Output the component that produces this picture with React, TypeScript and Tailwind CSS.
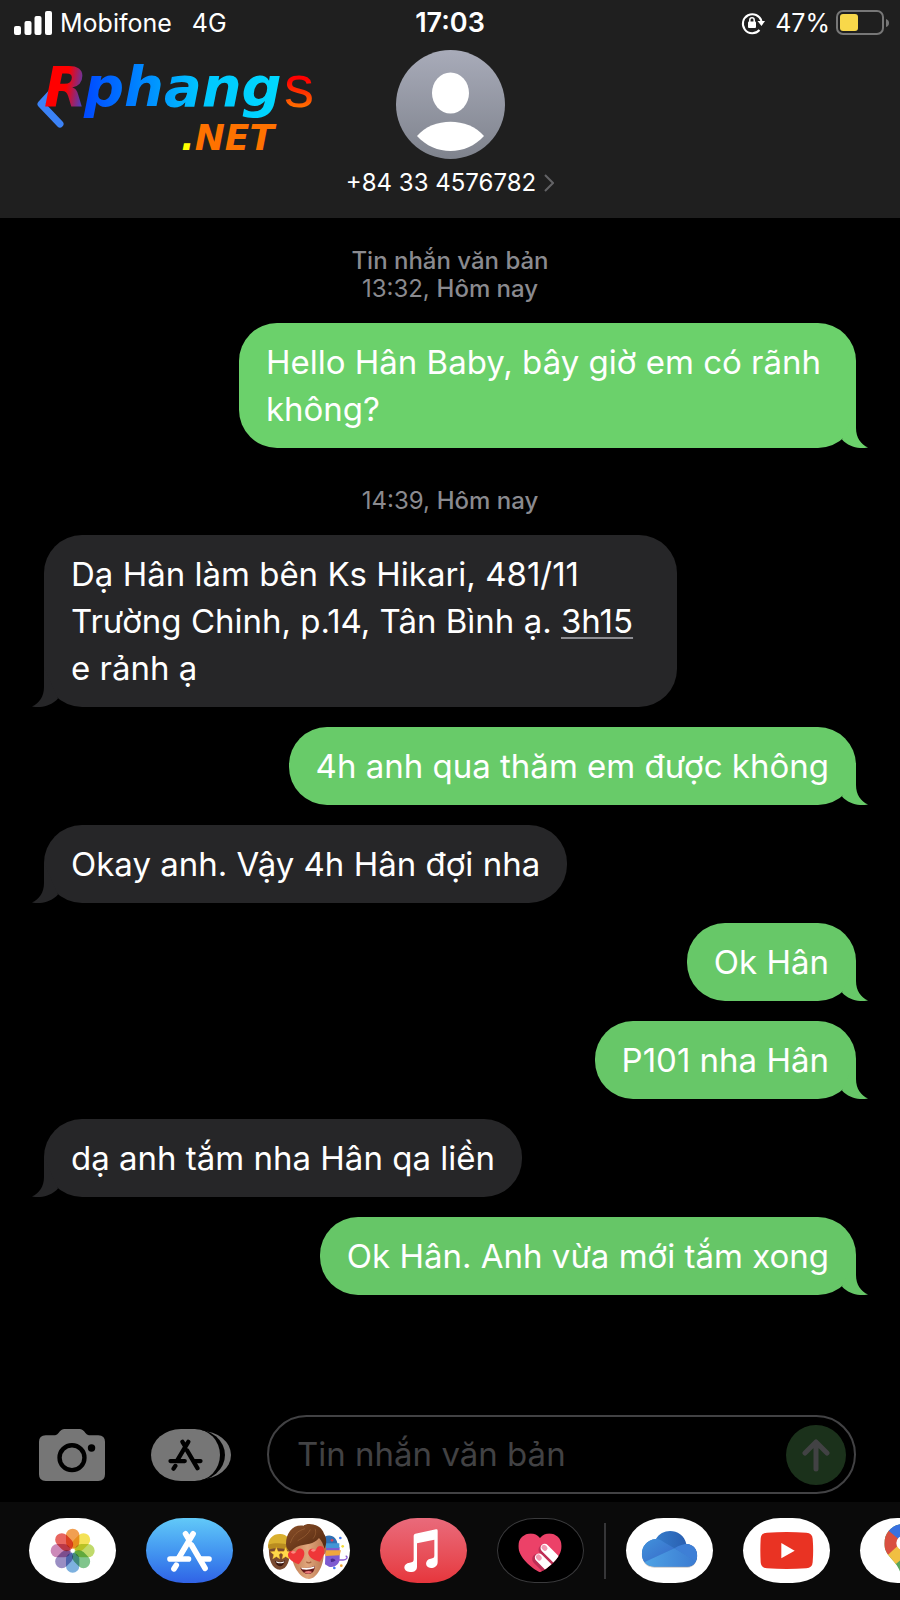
import React, { useState } from 'react';
import clsx from 'clsx';

type Message = {
  from: 'me' | 'them';
  text: React.ReactNode;
  tone: string;
};

const firstMessages: Message[] = [
  { from: 'me', text: 'Hello Hân Baby, bây giờ em có rãnh không?', tone: 'bg-[#6bd16b] text-[#6bd16b]' },
];

const laterMessages: Message[] = [
  {
    from: 'them',
    text: (
      <>
        Dạ Hân làm bên Ks Hikari, 481/11 Trường Chinh, p.14, Tân Bình ạ.{' '}
        <a href="#event" className="underline decoration-[#8e8e93] decoration-2 underline-offset-4">3h15</a>{' '}
        e rảnh ạ
      </>
    ),
    tone: 'bg-[#262628] text-[#262628]',
  },
  { from: 'me', text: '4h anh qua thăm em được không', tone: 'bg-[#68cb69] text-[#68cb69]' },
  { from: 'them', text: 'Okay anh. Vậy 4h Hân đợi nha', tone: 'bg-[#262628] text-[#262628]' },
  { from: 'me', text: 'Ok Hân', tone: 'bg-[#67c868] text-[#67c868]' },
  { from: 'me', text: 'P101 nha Hân', tone: 'bg-[#67c768] text-[#67c768]' },
  { from: 'them', text: 'dạ anh tắm nha Hân qa liền', tone: 'bg-[#262628] text-[#262628]' },
  { from: 'me', text: 'Ok Hân. Anh vừa mới tắm xong', tone: 'bg-[#66c667] text-[#66c667]' },
];

const petals = ['#f0953e', '#f3df45', '#b9d65b', '#72bf80', '#6fa8dc', '#8f82bd', '#c77cb0', '#e5554f'];

const Bubble: React.FC<{ message: Message }> = ({ message }) => {
  const mine = message.from === 'me';
  return (
    <li
      className={clsx(
        'relative rounded-[38px] px-[27px] pt-4 pb-[15px]',
        mine ? 'max-w-[76%] self-end' : 'max-w-[78%] self-start',
        message.tone
      )}
    >
      <p className="text-[33px] leading-[47px] text-white">{message.text}</p>
      <svg
        viewBox="0 0 40 40"
        className={clsx('absolute bottom-0 size-10', mine ? '-right-3' : '-left-3 -scale-x-100')}
        fill="currentColor"
        aria-hidden="true"
      >
        <path d="M28 0V20C28 30 33 36 40 39.6C31 41.2 21 39 14 31.5Z" />
      </svg>
    </li>
  );
};

const Logo = () => (
  <svg viewBox="0 0 300 120" className="h-[120px] w-[300px] overflow-visible" role="img" aria-label="Rphangs.NET">
    <defs>
      <linearGradient id="logoR" x1="0" y1="0" x2="1" y2="0.25">
        <stop offset="0.6" stopColor="#ff0000" />
        <stop offset="1" stopColor="#4a3fc0" />
      </linearGradient>
      <linearGradient id="logoWord" x1="0" x2="1">
        <stop offset="0" stopColor="#0048ff" />
        <stop offset="0.6" stopColor="#00c8ff" />
        <stop offset="1" stopColor="#00d8ff" />
      </linearGradient>
      <linearGradient id="logoS" x1="0" y1="0" x2="0" y2="1">
        <stop offset="0.4" stopColor="#ff0000" />
        <stop offset="0.85" stopColor="#ff7b00" />
      </linearGradient>
    </defs>
    <path d="M20 44L9 56L28 76" fill="none" stroke="#3b82f6" strokeWidth="7" strokeLinecap="round" strokeLinejoin="round" />
    <g fontFamily="DejaVu Sans, sans-serif" fontWeight="bold" fontStyle="italic">
      <text x="12" y="58" fontSize="56" fill="url(#logoR)">R</text>
      <text x="52" y="58" fontSize="56" fill="url(#logoWord)">phang</text>
      <text x="149" y="102" fontSize="36" fill="#ff7200"><tspan fill="#ffff00">.</tspan>NET</text>
    </g>
    <text x="252" y="59" fontSize="60" fontFamily="Liberation Sans, sans-serif" fill="url(#logoS)">s</text>
  </svg>
);

const Avatar = () => (
  <svg viewBox="0 0 109 109" className="size-[109px]" aria-hidden="true">
    <defs>
      <linearGradient id="avatar" x1="0" y1="0" x2="0" y2="1">
        <stop stopColor="#a8abb9" />
        <stop offset="1" stopColor="#7f838d" />
      </linearGradient>
    </defs>
    <circle cx="54.5" cy="54.5" r="54.5" fill="url(#avatar)" />
    <ellipse cx="54.5" cy="43" rx="18.5" ry="20.5" fill="#fff" />
    <path d="M21 86C37 67 72 67 88 86C70 106 39 106 21 86Z" fill="#fff" />
  </svg>
);

const StoreGlyph: React.FC<{ className: string }> = ({ className }) => (
  <svg viewBox="63 32 136 126" className={className} fill="none" stroke="currentColor" strokeWidth="17" strokeLinecap="round" aria-hidden="true">
    <path d="M142 43L98 117M119 43L128 58M137 77L178 147M91 138L84 149" />
    <path d="M72 119H128M164 119H190" />
  </svg>
);

const PhotosArt = () => (
  <svg viewBox="0 0 261 195" className="size-full isolate">
    {petals.map((color, index) => (
      <rect
        key={color}
        x="111"
        y="32"
        width="40"
        height="60"
        rx="20"
        fill={color}
        fillOpacity="0.9"
        transform={`rotate(${index * 45} 131 98)`}
        className="mix-blend-multiply"
      />
    ))}
    <circle cx="131" cy="98" r="5" fill="#fff" />
  </svg>
);

const MemojiArt = () => (
  <svg viewBox="0 0 261 195" className="size-full">
    <defs>
      <linearGradient id="hair" x1="0" y1="0" x2="1" y2="1">
        <stop stopColor="#8b5029" />
        <stop offset="1" stopColor="#4f250e" />
      </linearGradient>
      <linearGradient id="skin" x1="0" x2="1">
        <stop stopColor="#b9764c" />
        <stop offset="0.5" stopColor="#e0a67c" />
        <stop offset="1" stopColor="#b5734b" />
      </linearGradient>
      <path id="heart" d="M0 24C-15 13-24 4-23-8C-21-20-6-22 0-10C6-22 21-20 23-8C24 4 15 13 0 24Z" />
      <path id="star" d="M0-19L5-7L18-6L8 3L11 16L0 9L-11 16L-8 3L-18-6L-5-7Z" />
    </defs>
    <path d="M18 88C16 125 27 155 51 155C72 154 82 130 81 88Z" fill="#7a4a30" />
    <path d="M15 90C14 60 31 47 52 48C72 49 84 63 82 94C63 86 37 85 15 90Z" fill="#d9b02f" />
    <path d="M16 80C37 73 62 75 80 82L79 98C60 89 36 89 17 95Z" fill="#b98c20" />
    <use href="#star" x="40" y="107" fill="#ffd84a" stroke="#e9a61f" />
    <use href="#star" x="68" y="107" fill="#ffd84a" stroke="#e9a61f" />
    <path d="M36 128Q52 136 66 127Q62 145 51 145Q39 143 36 128Z" fill="#3b1710" />
    <path d="M39 130Q51 136 64 130L62 134Q51 138 41 134Z" fill="#fff" />
    <path d="M188 88H230V119C231 139 214 150 198 146L186 139Z" fill="#7d5bd0" />
    <path d="M185 56C203 46 224 57 224 84L188 84Z" fill="#2f6fb4" />
    <path d="M187 76H229V90H187Z" fill="#4295d5" />
    <path d="M187 97H234L230 112L187 114Z" fill="#f0a63c" />
    <circle cx="207" cy="67" r="4" fill="#d94255" />
    <path d="M216 126H241C252 126 256 116 248 114" fill="none" stroke="#8b5bd3" strokeWidth="4" />
    <path d="M203 123Q211 118 218 127Q212 133 204 132Z" fill="#4a2b92" />
    <circle cx="232" cy="60" r="4" fill="#4378ef" />
    <circle cx="239" cy="85" r="4" fill="#f4dc36" />
    <circle cx="214" cy="150" r="4" fill="#4378ef" />
    <circle cx="235" cy="143" r="4" fill="#f2a434" />
    <path d="M82 84C74 84 73 103 86 111C89 148 114 183 138 183C161 182 181 145 182 111C193 105 191 84 184 81L169 52H97Z" fill="url(#skin)" />
    <path d="M69 78C69 42 91 18 122 23C132 12 174 17 183 47C193 60 190 82 185 92C181 80 176 68 168 60C152 80 128 78 110 83C96 87 88 96 83 102C74 96 69 89 69 78Z" fill="url(#hair)" />
    <path d="M82 75C90 50 105 38 126 32M104 68C122 58 136 48 142 34M150 62C158 52 160 42 156 32" fill="none" stroke="#b97c4a" strokeWidth="2" opacity="0.6" />
    <use href="#heart" fill="#ef3638" transform="translate(101 114) rotate(-14) scale(1.07)" />
    <use href="#heart" fill="#ef3638" transform="translate(162 107) rotate(-18) scale(1.07)" />
    <ellipse cx="91" cy="103" rx="6" ry="4" fill="#ff8580" />
    <ellipse cx="151" cy="97" rx="6" ry="4" fill="#ff8580" />
    <path d="M130 131Q137 138 145 131" fill="none" stroke="#a86440" strokeWidth="4" />
    <path d="M112 149Q137 153 156 143Q155 168 135 168Q118 167 112 149Z" fill="#67191a" />
    <path d="M114 149Q137 153 155 145L153 151Q135 158 117 154Z" fill="#fff" />
    <path d="M123 163Q136 156 148 162Q137 172 123 163Z" fill="#e97575" />
  </svg>
);

const MusicArt = () => (
  <svg viewBox="0 0 261 195" className="size-full" fill="#fff">
    <path d="M101 53Q101 48 106 47L168 34Q173 33 173 38V132C173 144 163 150 153 150C133 149 134 124 152 122C160 121 163 120 163 112V65L111 76V146C111 158 101 163 90 162C67 160 68 136 89 134C98 133 101 131 101 124Z" />
  </svg>
);

const HeartArt = () => (
  <svg viewBox="0 0 261 195" className="size-full">
    <defs>
      <clipPath id="touch">
        <path d="M129 163C105 151 64 119 64 84C64 48 108 34 129 60C150 34 194 48 194 84C194 119 153 151 129 163Z" />
      </clipPath>
    </defs>
    <g clipPath="url(#touch)" strokeLinecap="round">
      <path d="M50 30H210V180H50Z" fill="#ec4168" />
      <path d="M140 95L196 151M121 123L175 177" stroke="#bd2e55" strokeWidth="31" />
      <path d="M143 90L199 146M126 119L180 173" stroke="#fff" strokeWidth="25" />
      <path d="M141 88L144 91M124 117L127 120" stroke="#f29ab2" strokeWidth="15" />
    </g>
  </svg>
);

const CloudArt = () => (
  <svg viewBox="0 0 261 195" className="size-full">
    <defs>
      <linearGradient id="cloudBack" x1="0" x2="1">
        <stop stopColor="#3b8ad8" />
        <stop offset="1" stopColor="#2453a6" />
      </linearGradient>
      <linearGradient id="cloudSide" x1="0" y1="0" x2="1" y2="1">
        <stop stopColor="#4295dc" />
        <stop offset="1" stopColor="#3767c8" />
      </linearGradient>
      <linearGradient id="cloudFront" x1="0" x2="1">
        <stop stopColor="#4fa4e5" />
        <stop offset="1" stopColor="#3b7bd2" />
      </linearGradient>
      <clipPath id="cloud">
        <path d="M85 146C35 146 34 68 90 63C109 27 171 31 181 78C226 80 222 146 184 146Z" />
      </clipPath>
    </defs>
    <path d="M85 149C35 149 34 71 90 66C109 30 171 34 181 81C226 83 222 149 184 149Z" fill="#000" opacity="0.2" />
    <g clipPath="url(#cloud)">
      <path d="M40 30H220V150H40Z" fill="url(#cloudBack)" />
      <path d="M40 60Q92 53 114 73L145 91L60 131L40 140Z" fill="url(#cloudSide)" />
      <path d="M145 91Q180 68 216 83V140L200 125Z" fill="#3e7fd6" />
      <path d="M58 131L145 91L211 130V150H50Z" fill="url(#cloudFront)" />
    </g>
  </svg>
);

const TubeArt = () => (
  <svg viewBox="0 0 261 195" className="size-full">
    <path d="M72 44Q131 40 190 44Q208 45 209 62Q212 97 209 133Q208 150 190 151Q131 155 72 151Q54 150 53 133Q51 97 53 62Q54 45 72 44Z" fill="#e93323" />
    <path d="M115 75L155 98L115 121Z" fill="#fff" />
  </svg>
);

const MapsArt = () => (
  <svg viewBox="0 0 261 195" className="size-full">
    <defs>
      <clipPath id="pin">
        <path d="M130 18C98 18 73 43 73 77C73 116 112 126 122 167Q130 190 138 167C148 126 187 116 187 77C187 43 162 18 130 18Z" />
      </clipPath>
    </defs>
    <g clipPath="url(#pin)">
      <path d="M60 0H200V190H60Z" fill="#58a55c" />
      <path d="M60 125L170 20L190 70L105 140L85 122Z" fill="#f1bf42" />
      <path d="M60 20L88 36L128 70L84 110L60 120Z" fill="#d95040" />
      <path d="M86 38L105 0H190L130 75Z" fill="#3871e0" />
    </g>
    <circle cx="130" cy="75" r="21" fill="#fff" />
  </svg>
);

const apps = [
  { name: 'Photos', shell: 'bg-white', art: <PhotosArt /> },
  {
    name: 'App Store',
    shell: 'bg-linear-to-b from-[#62c9f8] to-[#3162e6] text-white',
    art: <StoreGlyph className="h-[42px] w-[45px]" />,
  },
  { name: 'Memoji', shell: 'bg-white', art: <MemojiArt /> },
  { name: 'Music', shell: 'bg-linear-to-b from-[#e96a7b] to-[#e6353c]', art: <MusicArt /> },
  { name: 'Digital Touch', shell: 'bg-black ring-1 ring-[#3a3a3c] ring-inset', art: <HeartArt /> },
];

const moreApps = [
  { name: 'OneDrive', shell: 'bg-white', art: <CloudArt /> },
  { name: 'YouTube', shell: 'bg-white', art: <TubeArt /> },
  { name: 'Google Maps', shell: 'bg-white', art: <MapsArt /> },
];

const AppButton: React.FC<{ app: (typeof apps)[number] }> = ({ app }) => (
  <button
    type="button"
    aria-label={app.name}
    className={clsx(
      'flex h-[65px] w-[87px] shrink-0 items-center justify-center overflow-hidden rounded-[38px/33px]',
      app.shell
    )}
  >
    {app.art}
  </button>
);

const StatusBar = () => (
  <div className="grid h-[46px] grid-cols-[1fr_auto_1fr] items-center px-3.5 text-[25px] leading-8">
    <div className="flex items-center gap-2">
      <svg viewBox="0 0 38 24" className="h-6 w-[38px]" fill="#fff" aria-hidden="true">
        <rect x="0" y="15" width="7" height="9" rx="2" />
        <rect x="10.500" y="10" width="7" height="14" rx="2" />
        <rect x="20.500" y="5" width="7" height="19" rx="2" />
        <rect x="31" y="0" width="7" height="24" rx="2" />
      </svg>
      <span>Mobifone</span>
      <span className="ml-3">4G</span>
    </div>
    <time className="text-[27px] font-semibold">17:03</time>
    <div className="flex items-center justify-end">
      <svg viewBox="0 0 24 24" className="mr-2.5 size-6" fill="none" stroke="#fff" strokeWidth="2" aria-hidden="true">
        <path d="M18.500 19A9.500 9.500 0 1 1 20.500 10" />
        <path d="M16.500 10H24L20.500 15Z" fill="#fff" stroke="none" />
        <rect x="7" y="10.500" width="8" height="6.500" rx="1" fill="#fff" stroke="none" />
        <path d="M8.800 11V9A2.200 2.200 0 0 1 13.200 9V11" strokeWidth="1.500" />
      </svg>
      <span>47%</span>
      <svg viewBox="0 0 54 26" className="-mr-1 ml-1.5 h-[26px] w-[54px]" aria-hidden="true">
        <rect x="1" y="1" width="46" height="23" rx="6" fill="none" stroke="#777" strokeWidth="2" />
        <rect x="4" y="4" width="18" height="17" rx="3" fill="#f8d84a" />
        <path d="M50 9Q53 10 53 13Q53 16 50 17Z" fill="#777" />
      </svg>
    </div>
  </div>
);

export default function App() {
  const [draft, setDraft] = useState('');

  return (
    <div className="flex min-h-screen flex-col overflow-hidden bg-black font-['Inter','Noto_Sans',sans-serif] text-white">
      <header className="relative h-[218px] bg-[#1f1f1f]">
        <StatusBar />
        <button type="button" aria-label="Back" className="absolute top-12 left-8">
          <Logo />
        </button>
        <div className="flex flex-col items-center gap-2 pt-1">
          <Avatar />
          <a href="#contact" className="flex items-center gap-2 text-[24px] leading-8">
            +84 33 4576782
            <svg viewBox="0 0 10 18" className="h-[18px] w-2.5" fill="none" stroke="#636366" strokeWidth="2" aria-hidden="true">
              <path d="M1 1L9 9L1 17" />
            </svg>
          </a>
        </div>
      </header>

      <main className="flex-1 px-11 pt-[29px] text-[24px] leading-7 text-[#8a8a8f]">
        <p className="text-center font-medium">Tin nhắn văn bản</p>
        <p className="text-center">13:32, <span className="font-medium">Hôm nay</span></p>
        <ul className="mt-5 flex flex-col gap-5">
          {firstMessages.map((message, index) => (
            <Bubble key={index} message={message} />
          ))}
        </ul>
        <p className="mt-[39px] text-center">14:39, <span className="font-medium">Hôm nay</span></p>
        <ul className="mt-5 flex flex-col gap-5">
          {laterMessages.map((message, index) => (
            <Bubble key={index} message={message} />
          ))}
        </ul>
      </main>

      <footer>
        <form className="flex items-center pr-11 pb-2 pl-[39px]" onSubmit={(e) => e.preventDefault()}>
          <button type="button" aria-label="Camera" className="shrink-0">
            <svg viewBox="0 0 196 154" className="h-[52px] w-[66px]">
              <path d="M20 18H48Q54 18 58 12Q66 0 76 0H120Q130 0 138 12Q142 18 148 18H176Q196 18 196 38V134Q196 154 176 154H20Q0 154 0 134V38Q0 18 20 18Z" fill="#767676" />
              <circle cx="98" cy="85" r="37" fill="none" stroke="#000" strokeWidth="13" />
              <circle cx="156" cy="56" r="11" fill="#000" />
            </svg>
          </button>
          <button type="button" aria-label="Apps" className="relative ml-[46px] flex h-[52px] w-20 shrink-0 items-center">
            <span className="absolute inset-y-0.5 right-0 w-[70px] rounded-[30px/24px] bg-[#767676]" />
            <span className="relative flex h-[52px] w-[74px] items-center justify-center rounded-[30px/26px] border-r-[5px] border-black bg-[#767676] bg-clip-padding text-black">
              <StoreGlyph className="h-8 w-[35px]" />
            </span>
          </button>
          <div className="ml-9 flex h-[79px] min-w-0 flex-1 items-center rounded-full border-2 border-[#424244] pr-2 pl-7">
            <input
              type="text"
              aria-label="Tin nhắn văn bản"
              placeholder="Tin nhắn văn bản"
              value={draft}
              onChange={(e) => setDraft(e.target.value)}
              className="min-w-0 flex-1 bg-transparent text-[33px] leading-[47px] text-white outline-none placeholder:text-[#424244]"
            />
            <button type="submit" aria-label="Send" className="flex size-[60px] shrink-0 items-center justify-center rounded-full bg-[#1b311b]">
              <svg viewBox="0 0 28 34" className="h-[34px] w-7" fill="none" stroke="#424244" strokeWidth="5" strokeLinecap="round" strokeLinejoin="round">
                <path d="M14 31V4M3 15L14 4L25 15" />
              </svg>
            </button>
          </div>
        </form>
        <nav aria-label="iMessage apps" className="flex items-center gap-[30px] overflow-hidden bg-[#0a0a0a] pt-4 pb-[17px] pl-[29px]">
          {apps.map((app) => (
            <AppButton key={app.name} app={app} />
          ))}
          <span className="-mx-2.5 h-14 w-0.5 shrink-0 bg-[#363638]" />
          {moreApps.map((app) => (
            <AppButton key={app.name} app={app} />
          ))}
        </nav>
      </footer>
    </div>
  );
}
